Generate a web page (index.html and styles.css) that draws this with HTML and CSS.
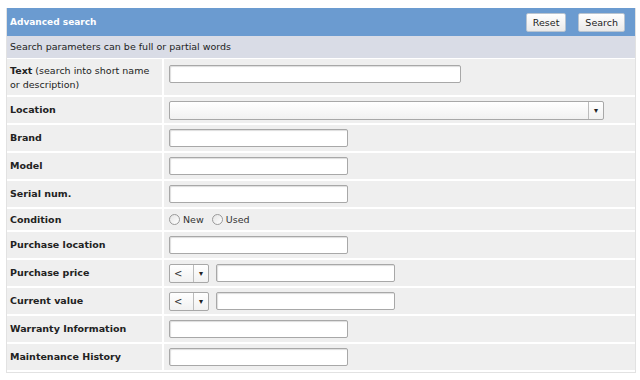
FILE: index.html
```html
<!DOCTYPE html>
<html lang="en">
<head>
  <meta charset="utf-8">
  <title>Advanced search</title>
  <link rel="stylesheet" href="styles.css">
</head>
<body>
  <div class="panel">
    <div class="panel-head">
      <span class="panel-title">Advanced search</span>
      <div class="actions">
        <button class="btn">Reset</button>
        <button class="btn">Search</button>
      </div>
    </div>
    <div class="hint">Search parameters can be full or partial words</div>

    <div class="row row-tall">
      <div class="label label-stack">
        <div><b>Text</b> (search into short name</div>
        <div>or description)</div>
      </div>
      <div class="field"><input class="txt txt-mid" type="text"></div>
    </div>
    <div class="row">
      <div class="label"><b>Location</b></div>
      <div class="field">
        <div class="select select-wide"><span class="sel-val"></span><span class="sel-arrow">&#9662;</span></div>
      </div>
    </div>
    <div class="row">
      <div class="label"><b>Brand</b></div>
      <div class="field"><input class="txt" type="text"></div>
    </div>
    <div class="row">
      <div class="label"><b>Model</b></div>
      <div class="field"><input class="txt" type="text"></div>
    </div>
    <div class="row">
      <div class="label"><b>Serial num.</b></div>
      <div class="field"><input class="txt" type="text"></div>
    </div>
    <div class="row row-short">
      <div class="label"><b>Condition</b></div>
      <div class="field">
        <label class="radio"><span class="dot"></span>New</label>
        <label class="radio"><span class="dot"></span>Used</label>
      </div>
    </div>
    <div class="row">
      <div class="label"><b>Purchase location</b></div>
      <div class="field"><input class="txt" type="text"></div>
    </div>
    <div class="row">
      <div class="label"><b>Purchase price</b></div>
      <div class="field">
        <div class="select select-op"><span class="sel-val">&lt;</span><span class="sel-arrow">&#9662;</span></div>
        <input class="txt" type="text">
      </div>
    </div>
    <div class="row">
      <div class="label"><b>Current value</b></div>
      <div class="field">
        <div class="select select-op"><span class="sel-val">&lt;</span><span class="sel-arrow">&#9662;</span></div>
        <input class="txt" type="text">
      </div>
    </div>
    <div class="row">
      <div class="label"><b>Warranty Information</b></div>
      <div class="field"><input class="txt" type="text"></div>
    </div>
    <div class="row">
      <div class="label"><b>Maintenance History</b></div>
      <div class="field"><input class="txt" type="text"></div>
    </div>
  </div>
</body>
</html>
```
FILE: styles.css
```css
body {
  margin: 0;
  background: #ffffff;
  font-family: "DejaVu Sans", Verdana, sans-serif;
  font-size: 9px;
  color: #111;
}

.panel {
  margin: 8px 6px 0 6px;
  width: 628px;
  border: 1px solid #e2e2e2;
  border-top: none;
  background: #fff;
}

.panel-head {
  height: 28px;
  background: #6b9bd0;
  display: flex;
  align-items: center;
  justify-content: space-between;
  padding: 0 10px 0 3px;
  box-sizing: border-box;
}

.panel-title {
  color: #fff;
  font-weight: bold;
  font-size: 9px;
}

.actions {
  display: flex;
  gap: 12px;
}

.btn {
  height: 19px;
  padding: 0 6px;
  font-family: "DejaVu Sans", Verdana, sans-serif;
  font-size: 9.5px;
  color: #222;
  background: linear-gradient(#ffffff, #e9e9e9);
  border: 1px solid #b9c4d0;
  border-radius: 2px;
}

.hint {
  height: 22px;
  line-height: 22px;
  padding-left: 3px;
  background: #d9dce6;
  border-bottom: 1px solid #fff;
  font-size: 9.5px;
  color: #222;
}

.row {
  display: grid;
  grid-template-columns: 155px 1fr;
  column-gap: 2px;
  height: 26px;
  border-bottom: 2px solid #fff;
}

.row-tall {
  height: 36px;
}

.row-short {
  height: 21px;
}

.label,
.field {
  background: #efefef;
  display: flex;
  align-items: center;
}

.label {
  padding: 0 8px 0 3px;
  line-height: 14px;
  font-size: 9.5px;
  color: #222;
}

.label.label-stack {
  flex-direction: column;
  align-items: flex-start;
  justify-content: flex-start;
  padding-top: 5px;
}

.field {
  padding-left: 5px;
  gap: 7px;
}

.row-tall .field {
  align-items: flex-start;
  padding-top: 6px;
}

.txt {
  width: 179px;
  height: 18px;
  box-sizing: border-box;
  border: 1px solid #a8a8a8;
  border-radius: 2px;
  background: #fff;
  box-shadow: inset 1px 1px 1px #ddd;
  margin: 0;
}

.txt-mid {
  width: 292px;
}

.select {
  height: 19px;
  box-sizing: border-box;
  border: 1px solid #a8a8a8;
  border-radius: 2px;
  background: linear-gradient(#ffffff, #f1f1f1);
  display: flex;
}

.select-wide {
  width: 435px;
}

.select-op {
  width: 40px;
}

.sel-val {
  flex: 1;
  padding-left: 4px;
  line-height: 17px;
  font-size: 10px;
  color: #333;
}

.sel-arrow {
  width: 14px;
  border-left: 1px solid #bcbcbc;
  text-align: center;
  line-height: 17px;
  font-size: 8px;
  color: #222;
}

.radio {
  display: flex;
  align-items: center;
  gap: 3px;
  margin-right: 1px;
  color: #333;
  font-size: 9.5px;
}

.dot {
  width: 9px;
  height: 9px;
  border: 1px solid #9a9a9a;
  border-radius: 50%;
  background: linear-gradient(135deg, #e4e4e4, #ffffff);
}
```
